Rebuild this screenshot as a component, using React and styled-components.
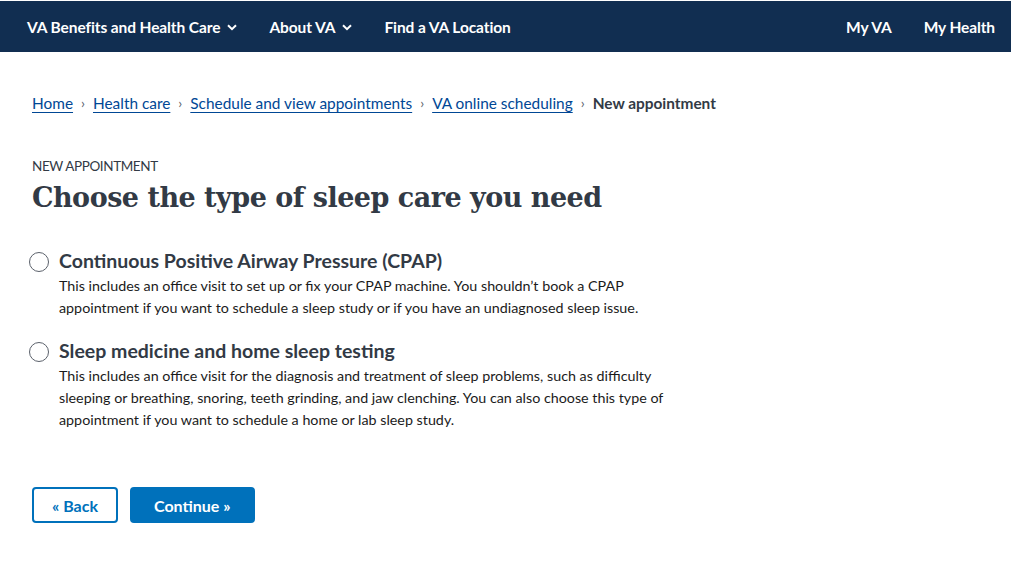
import React from "react";
import styled, { createGlobalStyle } from "styled-components";

const GlobalStyle = createGlobalStyle`
  body {
    margin: 0;
    background: #ffffff;
    font-family: Lato, "Noto Sans", sans-serif;
    color: #1b1b1b;
  }
`;

const Header = styled.header`
  height: 52px;
  background: #112e51;
  border-top: 1px solid #ffffff;
  box-sizing: border-box;
  display: flex;
  align-items: center;
  justify-content: space-between;
  padding: 1px 16px 0 27px;
`;

const NavGroup = styled.nav`
  display: flex;
  align-items: center;
  gap: ${(props) => props.gap || 32}px;
`;

const NavItem = styled.span`
  display: flex;
  align-items: center;
  gap: 7px;
  color: #ffffff;
  font-size: 15.5px;
  font-weight: 700;
  letter-spacing: -0.1px;
`;

const Main = styled.main`
  padding: 41px 32px 0;
`;

const Crumbs = styled.ol`
  list-style: none;
  margin: 0;
  padding: 0;
  display: flex;
  align-items: center;
  font-size: 15.4px;
  line-height: 20px;
`;

const Crumb = styled.li`
  display: flex;
  align-items: center;
  color: #323a45;
  font-weight: ${(props) => (props.current ? 700 : 400)};
`;

const CrumbLink = styled.a`
  color: #004795;
  text-decoration: underline;
  text-underline-offset: 3px;
`;

const Sep = styled.span`
  color: #5b616b;
  margin: 0 8px;
  font-size: 14px;
`;

const Eyebrow = styled.div`
  margin-top: 45px;
  font-size: 13.5px;
  text-transform: uppercase;
  color: #323a45;
  letter-spacing: -0.4px;
`;

const Title = styled.h1`
  margin: 8px 0 0;
  font-family: "DejaVu Serif", serif;
  font-size: 27px;
  font-weight: 700;
  color: #323a45;
  letter-spacing: -0.5px;
`;

const Options = styled.div`
  margin-top: 38px;
  display: flex;
  flex-direction: column;
  gap: 22px;
`;

const Option = styled.label`
  display: grid;
  grid-template-columns: 20px 1fr;
  column-gap: 7px;
  cursor: pointer;
`;

const Radio = styled.span`
  width: 20px;
  height: 20px;
  margin-top: 1px;
  margin-left: -3px;
  border-radius: 50%;
  border: 1px solid #5b616b;
  box-sizing: border-box;
  background: #ffffff;
`;

const OptionTitle = styled.div`
  font-size: 19.5px;
  font-weight: 700;
  color: #323a45;
  line-height: 24px;
  margin-top: -2px;
`;

const OptionText = styled.p`
  grid-column: 2;
  margin: 2px 0 0;
  max-width: 625px;
  font-size: 14.3px;
  line-height: 22px;
  color: #1b1b1b;
`;

const Actions = styled.div`
  margin-top: 56px;
  display: flex;
  gap: 12px;
`;

const Button = styled.button`
  height: 36px;
  padding: 0 ${(props) => (props.primary ? 22 : 18)}px;
  border-radius: 4px;
  font-family: inherit;
  font-size: 16px;
  font-weight: 700;
  box-sizing: border-box;
  border: 2px solid #0071bb;
  background: ${(props) => (props.primary ? "#0071bb" : "#ffffff")};
  color: ${(props) => (props.primary ? "#ffffff" : "#0071bb")};
  cursor: pointer;
`;

const Chevron = () => (
  <svg width="10" height="7" viewBox="0 0 10 7" fill="none">
    <path d="M1 1.2l4 4 4-4" stroke="#ffffff" strokeWidth="2" />
  </svg>
);

const options = [
  {
    title: "Continuous Positive Airway Pressure (CPAP)",
    text: "This includes an office visit to set up or fix your CPAP machine. You shouldn’t book a CPAP appointment if you want to schedule a sleep study or if you have an undiagnosed sleep issue.",
  },
  {
    title: "Sleep medicine and home sleep testing",
    text: "This includes an office visit for the diagnosis and treatment of sleep problems, such as difficulty sleeping or breathing, snoring, teeth grinding, and jaw clenching. You can also choose this type of appointment if you want to schedule a home or lab sleep study.",
  },
];

export default function App() {
  return (
    <>
      <GlobalStyle />
      <Header>
        <NavGroup gap={32}>
          <NavItem>
            VA Benefits and Health Care <Chevron />
          </NavItem>
          <NavItem>
            About VA <Chevron />
          </NavItem>
          <NavItem>Find a VA Location</NavItem>
        </NavGroup>
        <NavGroup gap={32}>
          <NavItem>My VA</NavItem>
          <NavItem>My Health</NavItem>
        </NavGroup>
      </Header>
      <Main>
        <Crumbs>
          <Crumb>
            <CrumbLink href="#">Home</CrumbLink>
            <Sep>›</Sep>
          </Crumb>
          <Crumb>
            <CrumbLink href="#">Health care</CrumbLink>
            <Sep>›</Sep>
          </Crumb>
          <Crumb>
            <CrumbLink href="#">Schedule and view appointments</CrumbLink>
            <Sep>›</Sep>
          </Crumb>
          <Crumb>
            <CrumbLink href="#">VA online scheduling</CrumbLink>
            <Sep>›</Sep>
          </Crumb>
          <Crumb current>New appointment</Crumb>
        </Crumbs>
        <Eyebrow>New appointment</Eyebrow>
        <Title>Choose the type of sleep care you need</Title>
        <Options>
          {options.map((o) => (
            <Option key={o.title}>
              <Radio />
              <OptionTitle>{o.title}</OptionTitle>
              <OptionText>{o.text}</OptionText>
            </Option>
          ))}
        </Options>
        <Actions>
          <Button>« Back</Button>
          <Button primary>Continue »</Button>
        </Actions>
      </Main>
    </>
  );
}
